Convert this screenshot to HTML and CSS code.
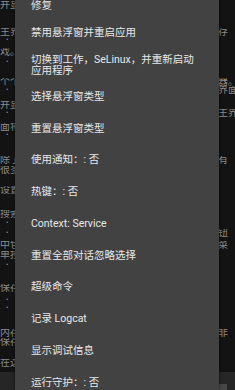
FILE: index.html
```html
<!DOCTYPE html>
<html>
<head>
<meta charset="utf-8">
<link rel="stylesheet" href="styles.css">
</head>
<body>
<div class="page">
  <div class="doc">
    <div class="row s1"><span class="l">并显示</span><span class="r"></span></div>
    <div class="row s19"><span class="l">主界面</span><span class="r">存</span></div>
    <div class="row"><span class="l b">•</span><span class="r"></span></div>
    <div class="row s4"><span class="l">戏。</span><span class="r"></span></div>
    <div class="row s2"><span class="l b">•</span><span class="r"></span></div>
    <div class="row s12"><span class="l">个个</span><span class="r">器。</span></div>
    <div class="row"><span class="l b">•</span><span class="r">界面</span></div>
    <div class="row s7"><span class="l">并显</span><span class="r"></span></div>
    <div class="row"><span class="l b">•</span><span class="r">主界</span></div>
    <div class="row s6"><span class="l">面将</span><span class="r"></span></div>
    <div class="row"><span class="l b">•</span><span class="r"></span></div>
    <div class="row s17"><span class="l">除了</span><span class="r">有</span></div>
    <div class="row s2"><span class="l">很多</span><span class="r"></span></div>
    <div class="row s12"><span class="l">设置</span><span class="r"></span></div>
    <div class="row s16"><span class="l">搜索</span><span class="r"></span></div>
    <div class="row s1"><span class="l b">•</span><span class="r"></span></div>
    <div class="row s2"><span class="l b">•</span><span class="r">钮</span></div>
    <div class="row s4"><span class="l">中包</span><span class="r">菜</span></div>
    <div class="row s2"><span class="l">单按</span><span class="r"></span></div>
    <div class="row s2"><span class="l b">•</span><span class="r"></span></div>
    <div class="row s15"><span class="l">保存</span><span class="r"></span></div>
    <div class="row s4"><span class="l b">•</span><span class="r"></span></div>
    <div class="row"><span class="l b">•</span><span class="r"></span></div>
    <div class="row s17"><span class="l">内存</span><span class="r">非</span></div>
    <div class="row s1"><span class="l">保存</span><span class="r"></span></div>
    <div class="row s13"><span class="l">在这</span><span class="r"></span></div>
    <div class="inputbar"><span class="knob"></span></div>
  </div>

  <div class="menu">
    <div class="item first">修复</div>
    <div class="item">禁用悬浮窗并重启应用</div>
    <div class="item">切换到工作，SeLinux，并重新启动应用程序</div>
    <div class="item">选择悬浮窗类型</div>
    <div class="item">重置悬浮窗类型</div>
    <div class="item">使用通知：: 否</div>
    <div class="item">热键：: 否</div>
    <div class="item">Context: Service</div>
    <div class="item">重置全部对话忽略选择</div>
    <div class="item">超级命令</div>
    <div class="item">记录 Logcat</div>
    <div class="item">显示调试信息</div>
    <div class="item">运行守护：: 否</div>
  </div>
</div>
</body>
</html>
```
FILE: styles.css
```css
html, body {
  margin: 0;
  padding: 0;
  background: #131313;
}

.page {
  position: relative;
  width: 235px;
  height: 390px;
  overflow: hidden;
  background: #131313;
  font-family: Roboto, "Noto Sans CJK SC", sans-serif;
}

.doc {
  display: flex;
  flex-direction: column;
  color: #8a8a8a;
  font-size: 10px;
}

.row {
  display: grid;
  grid-template-columns: 1fr 17px;
  height: 8px;
  line-height: 8px;
  white-space: nowrap;
}

.row .l {
  overflow: hidden;
  padding-left: 0;
}

.row .l.b {
  padding-left: 6px;
  font-size: 7px;
}

.row .r {
  overflow: hidden;
}

.s1 { margin-top: 1px; }
.s2 { margin-top: 2px; }
.s4 { margin-top: 4px; }
.s6 { margin-top: 6px; }
.s7 { margin-top: 7px; }
.s12 { margin-top: 12px; }
.s13 { margin-top: 13px; }
.s15 { margin-top: 15px; }
.s16 { margin-top: 16px; }
.s17 { margin-top: 17px; }
.s19 { margin-top: 19px; }

.inputbar {
  margin-top: 5px;
  height: 20px;
  background: #262626;
  display: flex;
  justify-content: flex-end;
  align-items: flex-end;
  padding-right: 8px;
}

.knob {
  width: 8px;
  height: 8px;
  background: #474747;
}

.menu {
  position: absolute;
  left: 15px;
  top: 0;
  width: 204px;
  bottom: 0;
  background: #424242;
  box-shadow: 0 0 3px rgba(0, 0, 0, 0.6);
  display: flex;
  flex-direction: column;
  color: #e8e8e8;
  font-size: 10.5px;
  line-height: 11px;
}

.item {
  box-sizing: border-box;
  min-height: 31.75px;
  padding: 0 20px 0 16px;
  display: flex;
  align-items: center;
  flex-shrink: 0;
}

.item.first {
  min-height: 17px;
  height: 17px;
  align-items: flex-start;
  padding-top: 0;
}
```
